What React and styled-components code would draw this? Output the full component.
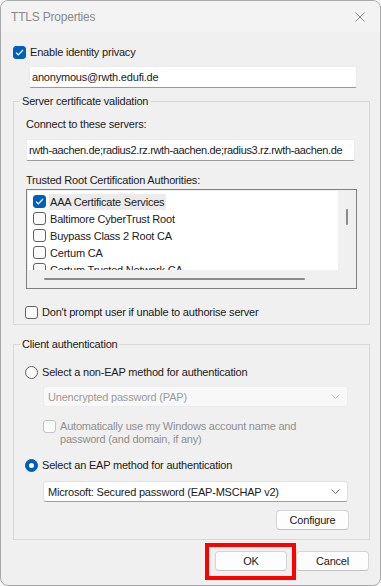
import React from "react";
import styled, { createGlobalStyle } from "styled-components";

const GlobalStyle = createGlobalStyle`
  html, body {
    margin: 0;
    padding: 0;
    background: #f7f7f7;
  }
  body {
    font-family: "Liberation Sans", Arial, sans-serif;
    font-size: 11px;
    letter-spacing: -0.2px;
    color: #1a1a1a;
  }
  * {
    box-sizing: border-box;
  }
`;

const Window = styled.div`
  width: 381px;
  height: 586px;
  border: 1px solid #a9a9a9;
  border-radius: 8px;
  background: #f0f0f0;
  display: flex;
  flex-direction: column;
  overflow: hidden;
`;

const TitleBar = styled.div`
  height: 31px;
  flex-shrink: 0;
  display: flex;
  align-items: center;
  justify-content: space-between;
  padding: 0 11px 0 10px;
  background: #f3f3f3;
`;

const Title = styled.span`
  font-size: 12px;
  color: #8a8a8a;
`;

const CloseIcon = styled.svg`
  width: 10px;
  height: 10px;
  margin-right: 4px;
`;

const Content = styled.div`
  display: flex;
  flex-direction: column;
  padding: 0 10px 0 12px;
`;

const CheckRow = styled.label`
  display: flex;
  align-items: center;
  gap: 4px;
  height: 16px;
  margin-top: ${(p) => p.$top || 0}px;
  margin-left: ${(p) => p.$left || 0}px;
  color: ${(p) => (p.$disabled ? "#8f8f8f" : "#1a1a1a")};
`;

const Box = styled.span`
  width: 13px;
  height: 13px;
  flex-shrink: 0;
  border-radius: 3px;
  display: flex;
  align-items: center;
  justify-content: center;
  background: ${(p) => (p.$checked ? "#005fb8" : "#fbfbfb")};
  border: 1px solid
    ${(p) => (p.$checked ? "#005fb8" : p.$disabled ? "#c4c4c4" : "#616161")};
`;

const Radio = styled.span`
  width: 13px;
  height: 13px;
  flex-shrink: 0;
  border-radius: 50%;
  display: flex;
  align-items: center;
  justify-content: center;
  background: ${(p) => (p.$checked ? "#005fb8" : "#fbfbfb")};
  border: 1px solid ${(p) => (p.$checked ? "#005fb8" : "#616161")};

  &::after {
    content: "";
    display: ${(p) => (p.$checked ? "block" : "none")};
    width: 5px;
    height: 5px;
    border-radius: 50%;
    background: #ffffff;
  }
`;

const TextInput = styled.div`
  height: 22px;
  margin-top: ${(p) => p.$top || 0}px;
  margin-left: ${(p) => p.$left || 0}px;
  width: ${(p) => p.$width}px;
  background: #ffffff;
  border: 1px solid #ececec;
  border-bottom-color: #9a9a9a;
  border-radius: 2px;
  padding: 0 2px;
  display: flex;
  align-items: center;
  white-space: nowrap;
  overflow: hidden;
  letter-spacing: ${(p) => p.$tight ? "-0.35px" : "-0.2px"};
`;

const Group = styled.fieldset`
  margin: ${(p) => p.$top}px 0 0 0;
  padding: 0 0 ${(p) => p.$bottom}px 0;
  border: 1px solid #d9d9d9;
  min-width: 0;
`;

const Legend = styled.legend`
  margin-left: 6px;
  padding: 0 2px;
  line-height: 14px;
  font-size: 11px;
`;

const GroupBody = styled.div`
  display: flex;
  flex-direction: column;
  padding: 0 12px 0 11px;
`;

const FieldLabel = styled.div`
  line-height: 16px;
  margin-top: ${(p) => p.$top || 0}px;
  margin-left: 1px;
`;

const ListBox = styled.div`
  margin-top: 1px;
  margin-left: 1px;
  width: 331px;
  height: 100px;
  border: 1px solid #7f7f7f;
  background: #f0f0f0;
  display: grid;
  grid-template-columns: 1fr 17px;
  grid-template-rows: 1fr 17px;
  padding: 1px;
`;

const ListItems = styled.div`
  background: #ffffff;
  overflow: hidden;
  padding: 2px 0 0 5px;
  display: flex;
  flex-direction: column;
`;

const ListItem = styled.div`
  display: flex;
  align-items: center;
  gap: 5px;
  height: 17px;
  flex-shrink: 0;
`;

const ItemText = styled.span`
  line-height: 16px;
  padding: 0 2px 0 1px;
  margin-left: -2px;
  background: ${(p) => (p.$selected ? "#ebebeb" : "transparent")};
`;

const VScroll = styled.div`
  display: flex;
  justify-content: center;
  padding-top: 18px;
`;

const VThumb = styled.div`
  width: 2px;
  height: 16px;
  background: #8a8a8a;
  border-radius: 1px;
  margin-left: 1px;
`;

const HScroll = styled.div`
  display: flex;
  align-items: center;
  padding-left: 16px;
`;

const HThumb = styled.div`
  width: 261px;
  height: 2px;
  background: #8a8a8a;
  border-radius: 1px;
`;

const Combo = styled.div`
  width: 305px;
  height: 21px;
  margin-top: ${(p) => p.$top || 0}px;
  margin-left: 18px;
  border-radius: 3px;
  border: 1px solid ${(p) => (p.$disabled ? "#ececec" : "#e0e0e0")};
  border-bottom-color: ${(p) => (p.$disabled ? "#ececec" : "#a0a0a0")};
  background: ${(p) => (p.$disabled ? "#f8f8f8" : "#ffffff")};
  color: ${(p) => (p.$disabled ? "#9b9b9b" : "#1a1a1a")};
  display: flex;
  align-items: center;
  justify-content: space-between;
  padding: 0 7px 0 4px;
`;

const Chevron = styled.svg`
  width: 9px;
  height: 5px;
`;

const MultiLabel = styled.span`
  line-height: 13px;
`;

const DisabledRow = styled.div`
  display: flex;
  gap: 4px;
  margin-top: 13px;
  margin-left: 18px;
  color: #8f8f8f;
`;

const ButtonRow = styled.div`
  display: flex;
  justify-content: flex-end;
  margin-top: ${(p) => p.$top || 0}px;
  margin-right: ${(p) => p.$right || 0}px;
  gap: 9px;
`;

const Button = styled.div`
  position: relative;
  width: ${(p) => p.$width}px;
  height: 20px;
  border: 1px solid #d4d4d4;
  border-bottom-color: #c2c2c2;
  border-radius: 4px;
  background: #fdfdfd;
  display: flex;
  align-items: center;
  justify-content: center;
  color: #1a1a1a;

  &::after {
    content: "";
    display: ${(p) => (p.$marked ? "block" : "none")};
    position: absolute;
    left: -11px;
    top: -9px;
    right: -10px;
    bottom: -10px;
    border: 4px solid #ff0000;
  }
`;

function Check({ checked, disabled }) {
  return (
    <Box $checked={checked} $disabled={disabled}>
      {checked && (
        <svg width="9" height="7" viewBox="0 0 9 7">
          <path
            d="M1 3.6 L3.3 5.8 L8 1"
            fill="none"
            stroke="#ffffff"
            strokeWidth="1.2"
          />
        </svg>
      )}
    </Box>
  );
}

function Down({ color }) {
  return (
    <Chevron viewBox="0 0 9 5">
      <path d="M0.5 0.5 L4.5 4.5 L8.5 0.5" fill="none" stroke={color} strokeWidth="1" />
    </Chevron>
  );
}

const authorities = [
  { name: "AAA Certificate Services", checked: true },
  { name: "Baltimore CyberTrust Root" },
  { name: "Buypass Class 2 Root CA" },
  { name: "Certum CA" },
  { name: "Certum Trusted Network CA" },
];

export default function App() {
  return (
    <>
      <GlobalStyle />
      <Window>
        <TitleBar>
          <Title>TTLS Properties</Title>
          <CloseIcon viewBox="0 0 10 10">
            <path d="M0.5 0.5 L9.5 9.5 M9.5 0.5 L0.5 9.5" stroke="#8a8a8a" strokeWidth="1" />
          </CloseIcon>
        </TitleBar>

        <Content>
          <CheckRow $top={12}>
            <Check checked />
            <span>Enable identity privacy</span>
          </CheckRow>
          <TextInput $top={6} $left={16} $width={328}>
            anonymous@rwth.edufi.de
          </TextInput>

          <Group $top={6} $bottom={4}>
            <Legend>Server certificate validation</Legend>
            <GroupBody>
              <FieldLabel $top={8}>Connect to these servers:</FieldLabel>
              <TextInput $top={7} $left={1} $width={329} $tight>
                rwth-aachen.de;radius2.rz.rwth-aachen.de;radius3.rz.rwth-aachen.de
              </TextInput>
              <FieldLabel $top={11}>Trusted Root Certification Authorities:</FieldLabel>
              <ListBox>
                <ListItems>
                  {authorities.map((a) => (
                    <ListItem key={a.name}>
                      <Check checked={a.checked} />
                      <ItemText $selected={a.checked}>{a.name}</ItemText>
                    </ListItem>
                  ))}
                </ListItems>
                <VScroll>
                  <VThumb />
                </VScroll>
                <HScroll>
                  <HThumb />
                </HScroll>
              </ListBox>
              <CheckRow $top={15}>
                <Check />
                <span>Don&apos;t prompt user if unable to authorise server</span>
              </CheckRow>
            </GroupBody>
          </Group>

          <Group $top={12} $bottom={9}>
            <Legend>Client authentication</Legend>
            <GroupBody>
              <CheckRow $top={13}>
                <Radio />
                <span>Select a non-EAP method for authentication</span>
              </CheckRow>
              <Combo $top={6} $disabled>
                <span>Unencrypted password (PAP)</span>
                <Down color="#c0c0c0" />
              </Combo>
              <DisabledRow>
                <Check disabled />
                <MultiLabel>
                  Automatically use my Windows account name and
                  <br />
                  password (and domain, if any)
                </MultiLabel>
              </DisabledRow>
              <CheckRow $top={11}>
                <Radio $checked />
                <span>Select an EAP method for authentication</span>
              </CheckRow>
              <Combo $top={8}>
                <span>Microsoft: Secured password (EAP-MSCHAP v2)</span>
                <Down color="#6a6a6a" />
              </Combo>
              <ButtonRow $top={8} $right={8}>
                <Button $width={73}>Configure</Button>
              </ButtonRow>
            </GroupBody>
          </Group>

          <ButtonRow $top={11} $right={1}>
            <Button $width={72} $marked>
              OK
            </Button>
            <Button $width={73}>Cancel</Button>
          </ButtonRow>
        </Content>
      </Window>
    </>
  );
}
